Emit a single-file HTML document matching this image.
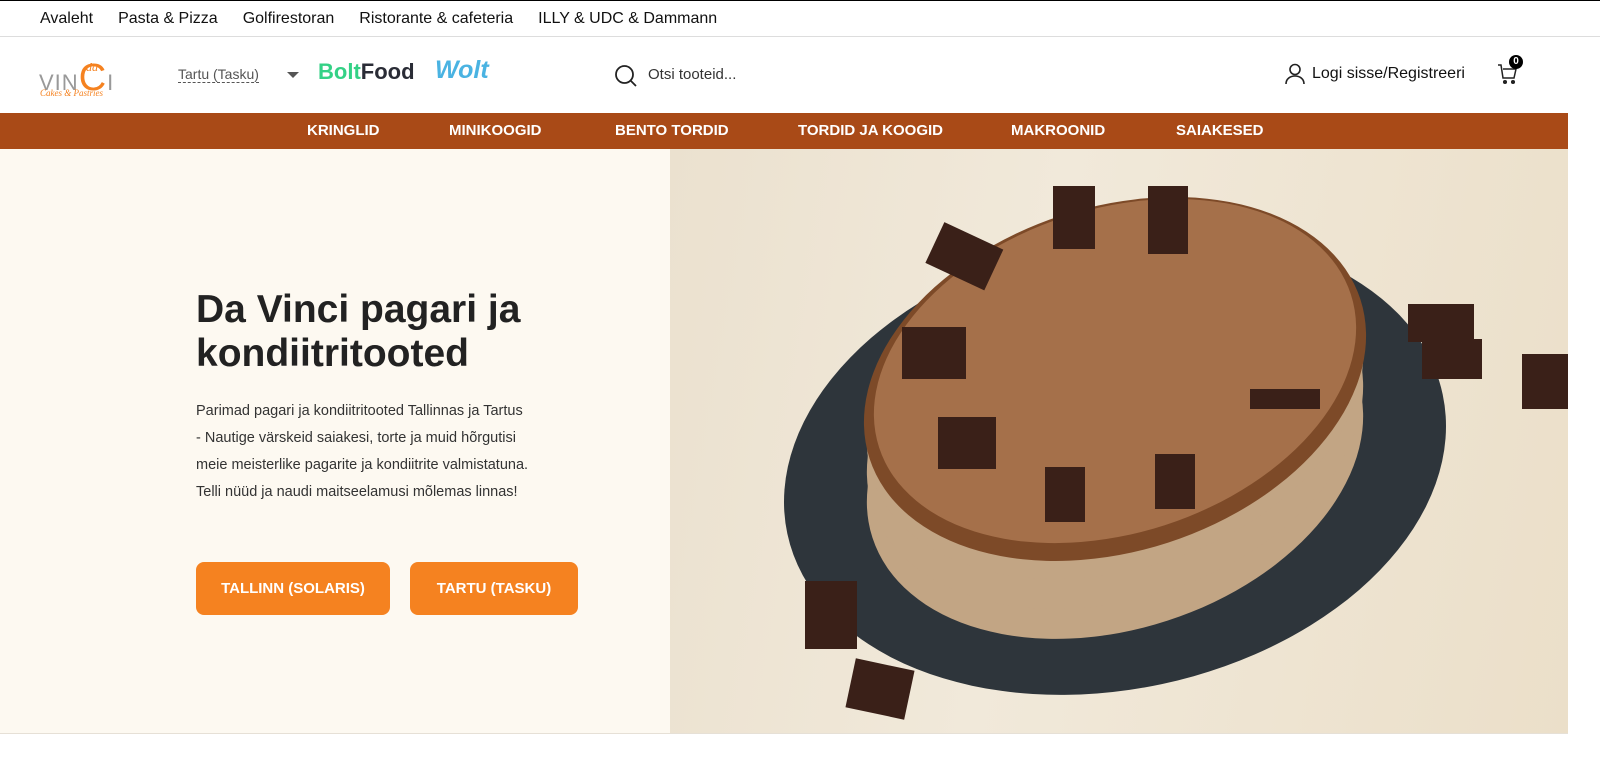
<!DOCTYPE html>
<html><head><meta charset="utf-8"><style>
*{margin:0;padding:0;box-sizing:border-box}
body{width:1600px;height:773px;overflow:hidden;background:#fff;font-family:"Liberation Sans",sans-serif;color:#222;position:relative}
.top{height:37px;border-top:1px solid #000;border-bottom:1px solid #ddd;display:flex;gap:25px;padding-left:40px;align-items:center;font-size:16px;color:#111}
.hdr{height:76px;position:relative}
.nav{position:absolute;top:113px;left:0;width:1568px;height:36px;background:#a94a17;color:#fff;font-weight:bold;font-size:15px}
.nav span{position:absolute;top:9px}
.hero{position:absolute;top:149px;left:0;width:670px;height:584px;background:#fdf9f1}
.img{position:absolute;top:149px;left:670px;width:898px;height:584px;background:linear-gradient(100deg,#ebe1cf,#f1e9da 40%,#ebdfc9);overflow:hidden}
h1{position:absolute;left:196px;top:288px;font-size:39px;line-height:44px;color:#222;font-weight:bold}
p{position:absolute;left:196px;top:398px;width:335px;font-size:14.5px;line-height:27px;color:#333}
.btn{position:absolute;top:562px;height:53px;background:#f58220;color:#fff;font-weight:bold;font-size:15px;border-radius:8px;display:flex;align-items:center;justify-content:center}
</style></head><body>
<div class="top"><span>Avaleht</span><span>Pasta &amp; Pizza</span><span>Golfirestoran</span><span>Ristorante &amp; cafeteria</span><span>ILLY &amp; UDC &amp; Dammann</span></div>
<div class="hdr">
 <div style="position:absolute;left:39px;top:20px;font-size:22px;color:#999;letter-spacing:1px;white-space:nowrap">VIN<span style="color:#f58220;font-size:38px;font-weight:normal">C</span>I</div>
 <div style="position:absolute;left:86px;top:23px;font-family:'Liberation Serif';font-style:italic;color:#f58220;font-size:12px">da</div>
 <div style="position:absolute;left:40px;top:51px;font-family:'Liberation Serif';font-style:italic;color:#f58220;font-size:9px;white-space:nowrap">Cakes &amp; Pastries</div>
 <div style="position:absolute;left:178px;top:29px;font-size:14px;color:#555;border-bottom:1px dashed #555">Tartu (Tasku)</div>
 <div style="position:absolute;left:287px;top:35px;border:6px solid transparent;border-top:6px solid #555"></div>
 <div style="position:absolute;left:318px;top:22px;font-size:22px;font-weight:bold;white-space:nowrap"><span style="color:#34d186">Bolt</span><span style="color:#2a2c36">Food</span></div>
 <div style="position:absolute;left:435px;top:19px;font-size:25px;font-weight:bold;font-style:italic;color:#4ab3e2">Wolt</div>
 <svg style="position:absolute;left:614px;top:27px" width="24" height="24" viewBox="0 0 24 24" fill="none" stroke="#222" stroke-width="1.8"><circle cx="10.5" cy="10.5" r="8.5"/><path d="M17 17l5 5"/></svg>
 <div style="position:absolute;left:648px;top:29px;font-size:15px;color:#333">Otsi tooteid...</div>
 <svg style="position:absolute;left:1285px;top:26px" width="20" height="22" viewBox="0 0 20 22" fill="none" stroke="#222" stroke-width="1.6"><circle cx="10" cy="6.5" r="5"/><path d="M1 21c0-5 4-8 9-8s9 3 9 8"/></svg>
 <div style="position:absolute;left:1312px;top:28px;font-size:16px;color:#111">Logi sisse/Registreeri</div>
 <svg style="position:absolute;left:1497px;top:26px" width="22" height="22" viewBox="0 0 22 22" fill="none" stroke="#222" stroke-width="1.5"><path d="M1 2h3l2 13h11l2-9H6"/><circle cx="8" cy="19" r="1.3" fill="#222"/><circle cx="16" cy="19" r="1.3" fill="#222"/></svg>
 <div style="position:absolute;left:1509px;top:18px;width:14px;height:14px;border-radius:50%;background:#000;color:#fff;font-size:10px;font-weight:bold;text-align:center;line-height:14px">0</div>
</div>
<div class="nav"><span style="left:307px">KRINGLID</span><span style="left:449px">MINIKOOGID</span><span style="left:615px">BENTO TORDID</span><span style="left:798px">TORDID JA KOOGID</span><span style="left:1011px">MAKROONID</span><span style="left:1176px">SAIAKESED</span></div>
<div class="hero"></div>
<div class="img">
<svg width="898" height="584" viewBox="0 0 898 584">
 <ellipse cx="445" cy="315" rx="335" ry="225" fill="#2e353b" transform="rotate(-12 445 315)"/>
 <g fill="#c2a584">
  <ellipse cx="445" cy="310" rx="255" ry="170" transform="rotate(-18 445 310)"/>
  <ellipse cx="445" cy="280" rx="255" ry="170" transform="rotate(-18 445 280)"/>
  <ellipse cx="445" cy="250" rx="255" ry="170" transform="rotate(-18 445 250)"/>
 </g>
 <ellipse cx="445" cy="230" rx="258" ry="172" fill="#7d4a28" transform="rotate(-18 445 230)"/>
 <ellipse cx="445" cy="222" rx="248" ry="162" fill="#a5704a" transform="rotate(-18 445 222)"/>
 <g fill="#3a2018"><rect x="135" y="432" width="52" height="68"/><rect x="180" y="515" width="60" height="50" transform="rotate(12 210 540)"/><rect x="738" y="155" width="66" height="38"/><rect x="752" y="190" width="60" height="40"/><rect x="852" y="205" width="46" height="55"/><rect x="262" y="85" width="65" height="45" transform="rotate(25 295 107)"/><rect x="383" y="37" width="42" height="63"/><rect x="478" y="37" width="40" height="68"/><rect x="232" y="178" width="64" height="52"/><rect x="268" y="268" width="58" height="52"/><rect x="375" y="318" width="40" height="55"/><rect x="485" y="305" width="40" height="55"/><rect x="580" y="240" width="70" height="20"/></g>
</svg>
</div>
<h1>Da Vinci pagari ja<br>kondiitritooted</h1>
<p>Parimad pagari ja kondiitritooted Tallinnas ja Tartus - Nautige värskeid saiakesi, torte ja muid hõrgutisi meie meisterlike pagarite ja kondiitrite valmistatuna. Telli nüüd ja naudi maitseelamusi mõlemas linnas!</p>
<div class="btn" style="left:196px;width:194px">TALLINN (SOLARIS)</div>
<div class="btn" style="left:410px;width:168px">TARTU (TASKU)</div>
<div style="position:absolute;top:733px;left:0;width:1568px;border-top:1px solid #e6e0d6"></div>
</body></html>
